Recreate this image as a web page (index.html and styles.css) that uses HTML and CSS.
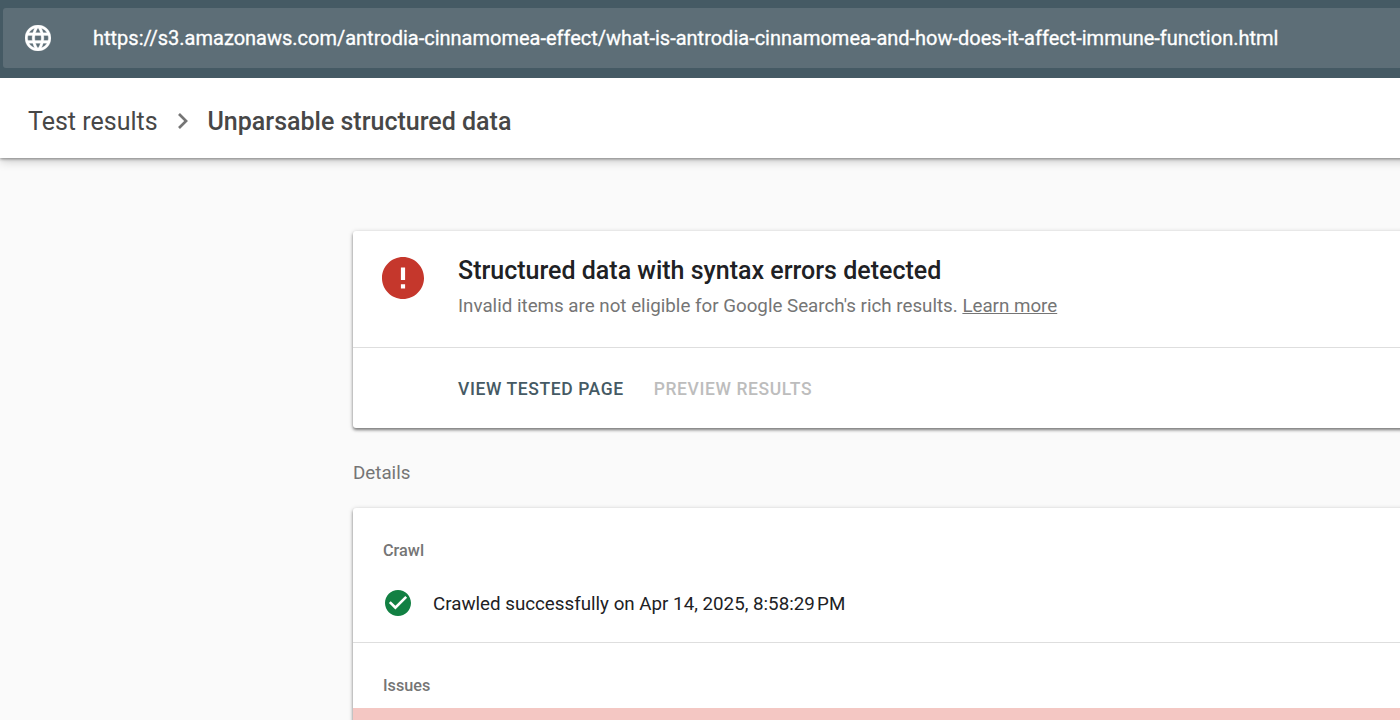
FILE: index.html
```html
<!DOCTYPE html>
<html lang="en">
<head>
<meta charset="utf-8">
<title>Test results - Unparsable structured data</title>
<link rel="stylesheet" href="styles.css">
</head>
<body>
<header class="topbar">
  <div class="url-field">
    <svg class="globe" viewBox="2 2 20 20" aria-hidden="true"><path fill="currentColor" stroke="currentColor" stroke-width=".25" d="M11.99 2C6.47 2 2 6.48 2 12s4.47 10 9.99 10C17.52 22 22 17.52 22 12S17.52 2 11.99 2zm6.93 6h-2.95c-.32-1.25-.78-2.45-1.38-3.56 1.84.63 3.37 1.91 4.33 3.56zM12 4.04c.83 1.2 1.48 2.53 1.91 3.96h-3.82c.43-1.43 1.08-2.76 1.91-3.96zM4.26 14C4.1 13.36 4 12.69 4 12s.1-1.36.26-2h3.38c-.08.66-.14 1.32-.14 2s.06 1.34.14 2H4.26zm.82 2h2.95c.32 1.25.78 2.45 1.38 3.56-1.84-.63-3.37-1.9-4.33-3.56zm2.95-8H5.08c.96-1.66 2.49-2.93 4.33-3.56C8.81 5.55 8.35 6.75 8.03 8zM12 19.96c-.83-1.2-1.48-2.53-1.91-3.96h3.82c-.43 1.43-1.08 2.76-1.91 3.96zM14.34 14H9.66c-.09-.66-.16-1.32-.16-2s.07-1.35.16-2h4.68c.09.65.16 1.32.16 2s-.07 1.34-.16 2zm.25 5.56c.6-1.11 1.06-2.31 1.38-3.56h2.95c-.96 1.65-2.49 2.93-4.33 3.56zM16.36 14c.08-.66.14-1.32.14-2s-.06-1.34-.14-2h3.38c.16.64.26 1.31.26 2s-.1 1.36-.26 2h-3.38z"/></svg>
    <span class="url">https://s3.amazonaws.com/antrodia-cinnamomea-effect/what-is-antrodia-cinnamomea-and-how-does-it-affect-immune-function.html</span>
  </div>
</header>
<nav class="breadcrumb">
  <span class="crumb">Test results</span>
  <svg class="chevron" viewBox="8.59 6 7.41 12" aria-hidden="true"><path fill="currentColor" d="M10 6 8.59 7.41 13.17 12l-4.58 4.59L10 18l6-6z"/></svg>
  <span class="crumb-current">Unparsable structured data</span>
</nav>
<main class="content">
  <section class="card summary-card">
    <div class="summary">
      <svg class="error-icon" viewBox="2 2 20 20" aria-hidden="true"><path fill="currentColor" d="M12 2C6.48 2 2 6.48 2 12s4.48 10 10 10 10-4.48 10-10S17.52 2 12 2zm1 15h-2v-2h2v2zm0-4h-2V7h2v6z"/></svg>
      <div class="summary-text">
        <h1 class="title">Structured data with syntax errors detected</h1>
        <p class="subtitle">Invalid items are not eligible for Google Search's rich results. <a class="link">Learn more</a></p>
      </div>
    </div>
    <div class="actions">
      <span class="action view">VIEW TESTED PAGE</span>
      <span class="action preview">PREVIEW RESULTS</span>
    </div>
  </section>
  <h2 class="details">Details</h2>
  <section class="card details-card">
    <div class="crawl">
      <h3 class="label">Crawl</h3>
      <div class="crawl-row">
        <svg class="ok-icon" viewBox="2 2 20 20" aria-hidden="true"><path fill="currentColor" d="M12 2C6.48 2 2 6.48 2 12s4.48 10 10 10 10-4.48 10-10S17.52 2 12 2zm-2 15-5-5 1.41-1.41L10 14.17l7.59-7.59L19 8l-9 9z"/></svg>
        <span class="crawl-text">Crawled successfully on Apr 14, 2025, 8:58:29&#8239;PM</span>
      </div>
    </div>
    <div class="issues"><h3 class="label label-issues">Issues</h3></div>
    <div class="issue-row"></div>
  </section>
</main>
</body>
</html>
```
FILE: styles.css
```css
* { box-sizing: border-box; }
body {
  margin: 0;
  height: 720px;
  overflow: hidden;
  display: flex;
  flex-direction: column;
  background: #fafafa;
  font-family: Roboto, "Liberation Sans", sans-serif;
  color: #202124;
}
h1, h2, h3, p { margin: 0; font-weight: 400; white-space: nowrap; }
svg { display: block; flex: none; }
.topbar { flex: none; height: 78px; padding: 8px 0 10px 3px; background: #455a64; }
.url-field {
  height: 60px;
  display: flex;
  align-items: center;
  padding-left: 22px;
  gap: 42px;
  background: #5d6e77;
  border-radius: 3px 0 0 3px;
  color: #fff;
}
.globe { width: 26px; height: 26px; }
.url { font-size: 20px; white-space: nowrap; letter-spacing: -0.005px; -webkit-text-stroke: 0.3px #fff; }
.breadcrumb {
  position: relative;
  flex: none;
  height: 80px;
  margin-right: -12px;
  padding: 6px 0 0 28px;
  display: flex;
  align-items: center;
  background: #fff;
  box-shadow: 0 1px 3px rgba(0,0,0,.4), 0 3px 10px rgba(0,0,0,.2);
  clip-path: inset(0 0 -20px 0);
  color: #474747;
  font-size: 25px;
}
.crumb { width: 150px; }
.chevron { width: 10px; height: 16px; color: #757575; }
.crumb-current { margin-left: 19.5px; font-weight: 500; }
.content { flex: 1; min-height: 0; padding: 73px 0 0 353px; overflow: hidden; }
.card {
  margin-right: -12px;
  background: #fff;
  border-radius: 3px 0 0 3px;
  box-shadow: 0 2px 3px rgba(0,0,0,.42), 0 1px 5px rgba(0,0,0,.2);
}
.summary-card { height: 197px; }
.summary {
  height: 117px;
  display: flex;
  padding: 26px 0 0 29px;
  gap: 34px;
  border-bottom: 1px solid #dedede;
}
.error-icon { width: 42px; height: 42px; color: #c5372c; }
.title { font-size: 25px; font-weight: 500; line-height: 28px; }
.subtitle { margin-top: 9px; font-size: 18.75px; line-height: 24px; color: #757575; }
.link { text-decoration: underline; text-decoration-thickness: 1px; }
.actions { height: 80px; display: flex; align-items: center; gap: 30px; padding: 1px 0 0 105px; font-size: 17.5px; font-weight: 500; letter-spacing: .6px; }
.view { color: #455a64; }
.preview { color: #bdbdbd; }
.details { margin: 33px 0 23px; line-height: 24px; font-size: 18.75px; color: #757575; }
.details-card { height: 300px; }
.crawl { height: 135px; padding: 33px 0 0 30px; border-bottom: 1px solid #dedede; }
.label { font-size: 16.25px; line-height: 20px; font-weight: 500; color: #757575; }
.crawl-row { display: flex; align-items: center; height: 26px; margin: 29px 0 0 2px; gap: 22px; }
.ok-icon { width: 26px; height: 26px; color: #128043; }
.crawl-text { padding-top: 2px; font-size: 18.75px; white-space: nowrap; }
.issues { height: 65px; padding: 33px 0 0 30px; }
.issue-row { height: 100px; background: #f4c7c3; }
```
